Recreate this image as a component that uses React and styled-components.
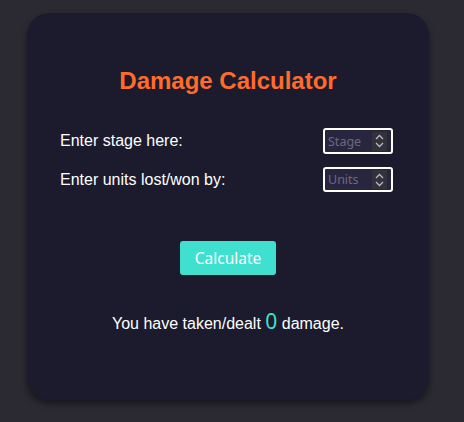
import React from "react";
import styled, { createGlobalStyle } from "styled-components";

const Global = createGlobalStyle`
  html, body { margin: 0; padding: 0; background: #2b2a33; }
  body { font-family: "Liberation Sans", Arial, sans-serif; }
  input[type=number]::-webkit-inner-spin-button,
  input[type=number]::-webkit-outer-spin-button { -webkit-appearance: none; margin: 0; }
`;

const Page = styled.div`
  width: 464px;
  height: 422px;
  padding: 13px 0 0 27px;
  box-sizing: border-box;
`;

const Card = styled.div`
  width: 402px;
  height: 387px;
  box-sizing: border-box;
  background: #1c1b2d;
  border-radius: 22px;
  box-shadow: 0 4px 6px rgba(0, 0, 0, 0.45);
  padding: 55px 36px 0 33px;
  display: flex;
  flex-direction: column;
`;

const Title = styled.h1`
  margin: 0;
  text-align: center;
  color: #ff6b2b;
  font-family: "Liberation Sans", Arial, sans-serif;
  font-weight: bold;
  font-size: 24px;
  line-height: 26px;
  padding-left: 3px;
`;

const Form = styled.div`
  margin-top: 34px;
  display: flex;
  flex-direction: column;
  gap: 13px;
`;

const Row = styled.div`
  display: flex;
  align-items: center;
  justify-content: space-between;
`;

const Label = styled.label`
  color: #ffffff;
  font-size: 16px;
  line-height: 18px;
`;

const Field = styled.div`
  width: 70px;
  height: ${(p) => p.$h}px;
  box-sizing: border-box;
  border: 2px solid #ffffff;
  border-radius: 3px;
  background: #28253f;
  display: flex;
  align-items: center;
  padding: 0 4px 0 3px;
`;

const Input = styled.input`
  flex: 1;
  min-width: 0;
  width: 40px;
  border: none;
  outline: none;
  background: transparent;
  color: #ffffff;
  font-family: "Noto Sans", "Open Sans", sans-serif;
  font-size: 12.5px;
  padding: 0;
  -moz-appearance: textfield;
  &::placeholder { color: #6d6782; }
`;

const Spin = styled.span`
  width: 15px;
  height: 19px;
  background: #33323c;
  display: flex;
  align-items: center;
  justify-content: center;
`;

const Button = styled.button`
  align-self: center;
  margin-top: 49px;
  margin-left: 3px;
  width: 96px;
  height: 34px;
  border: none;
  border-radius: 3px;
  background: #40e0d0;
  color: #ffffff;
  font-family: "Noto Sans", "Open Sans", sans-serif;
  font-size: 15.5px;
  padding: 0;
  cursor: pointer;
`;

const Result = styled.p`
  margin: 36px 0 0;
  text-align: center;
  color: #ffffff;
  font-size: 16px;
  line-height: 20px;
  padding-left: 3px;
`;

const Num = styled.span`
  color: #40e0d0;
  font-family: "Noto Sans", "Open Sans", sans-serif;
  font-size: 21px;
`;

const Arrows = () => (
  <svg width="9" height="14" viewBox="0 0 9 14" fill="none" stroke="#b9b8c0" strokeWidth="1.3">
    <path d="M1 5 L4.5 1.5 L8 5" />
    <path d="M1 9 L4.5 12.5 L8 9" />
  </svg>
);

const NumberField = ({ placeholder, h }) => (
  <Field $h={h}>
    <Input type="number" placeholder={placeholder} />
    <Spin>
      <Arrows />
    </Spin>
  </Field>
);

export default function App() {
  return (
    <>
      <Global />
      <Page>
        <Card>
          <Title>Damage Calculator</Title>
          <Form>
            <Row>
              <Label>Enter stage here:</Label>
              <NumberField placeholder="Stage" h={26} />
            </Row>
            <Row>
              <Label>Enter units lost/won by:</Label>
              <NumberField placeholder="Units" h={25} />
            </Row>
          </Form>
          <Button>Calculate</Button>
          <Result>
            You have taken/dealt <Num>0</Num> damage.
          </Result>
        </Card>
      </Page>
    </>
  );
}
